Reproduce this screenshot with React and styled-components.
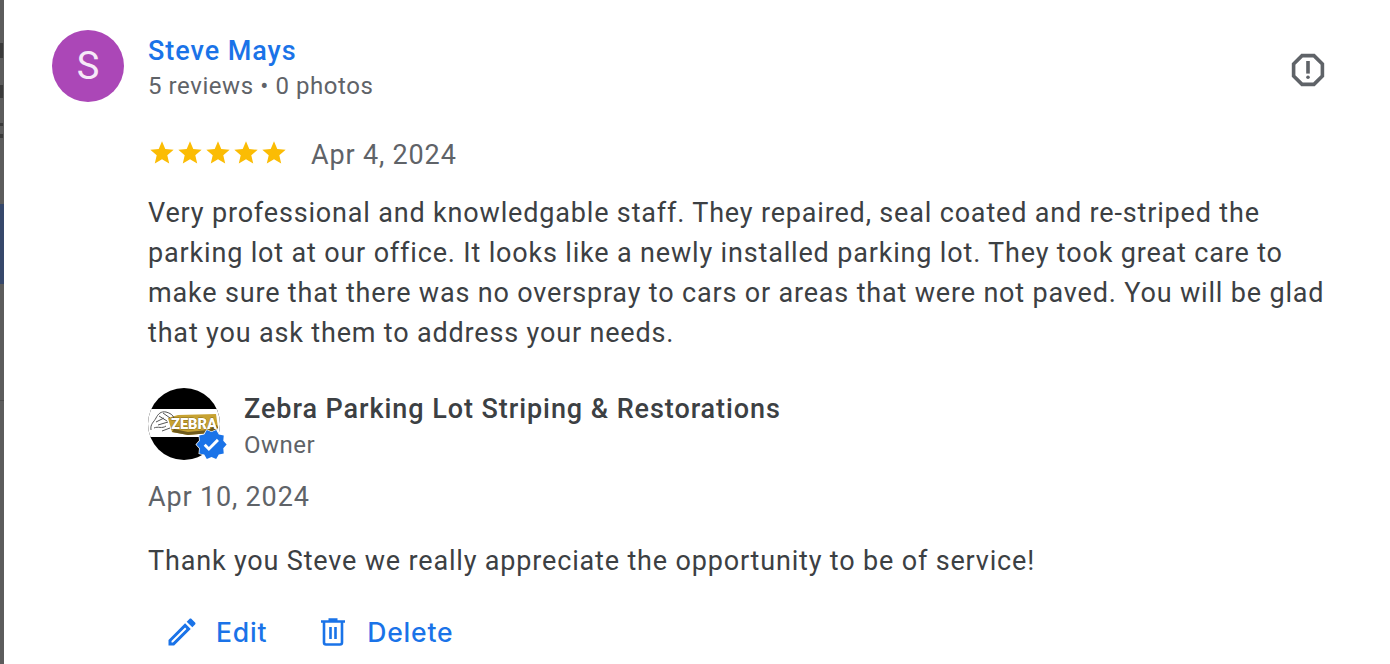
import React from "react";
import styled, { createGlobalStyle } from "styled-components";

const Global = createGlobalStyle`
  html, body {
    margin: 0;
    height: 100%;
    overflow: hidden;
    background: #fff;
  }
  body {
    font-family: Roboto, "Liberation Sans", sans-serif;
    color: #3c4043;
  }
`;

const Page = styled.div`
  display: flex;
  width: 1390px;
  height: 664px;
  overflow: hidden;
  background: #fff;
`;

const Backdrop = styled.div`
  position: relative;
  flex: 0 0 4px;
  height: 664px;
  overflow: hidden;
  background: #5c5c5c;
`;

const BackdropBand = styled.div`
  position: absolute;
  left: 0;
  right: 0;
  top: ${(p) => p.$top}px;
  height: ${(p) => p.$height}px;
  background: ${(p) => p.$color};
`;

const BackdropMark = styled.div`
  position: absolute;
  left: 0;
  width: 3px;
  top: ${(p) => p.$top}px;
  height: ${(p) => p.$height}px;
  background: #3a3a3a;
`;

const Card = styled.main`
  flex: 1;
  display: grid;
  grid-template-columns: 72px 1fr 36px;
  align-content: start;
  column-gap: 24px;
  padding: 30px 64px 0 48px;
`;

const Avatar = styled.div`
  width: 72px;
  height: 72px;
  border-radius: 50%;
  background: #ab47b7;
  color: #f6e9f8;
  font-size: 38px;
  line-height: 72px;
  text-align: center;
`;

const Header = styled.div`
  padding-top: 3px;
`;

const Name = styled.div`
  font-size: 27px;
  line-height: 36px;
  font-weight: 500;
  letter-spacing: 0.95px;
  color: #1a73e8;
`;

const Meta = styled.div`
  font-size: 24px;
  line-height: 32px;
  margin-top: 1px;
  letter-spacing: 0.57px;
  color: #5f6368;
`;

const Report = styled.div`
  display: flex;
  justify-content: center;
  padding-top: 20px;
`;

const Body = styled.div`
  grid-column: 2 / 4;
  padding-top: 33px;
`;

const RatingRow = styled.div`
  display: flex;
  align-items: center;
  gap: 23px;
  height: 40px;
`;

const Stars = styled.div`
  display: flex;
  margin-top: -4px;
`;

const DateText = styled.div`
  font-size: 27px;
  line-height: 40px;
  letter-spacing: 0.83px;
  color: #5f6368;
`;

const Paragraph = styled.p`
  margin: ${(p) => p.$top}px 0 0;
  font-size: 27px;
  line-height: 40px;
  letter-spacing: 0.83px;
  color: #3c4043;
`;

const Owner = styled.div`
  display: flex;
  gap: 24px;
  margin-top: 35px;
`;

const OwnerAvatar = styled.div`
  position: relative;
  width: 72px;
  height: 72px;
`;

const Badge = styled.svg`
  position: absolute;
  right: -8px;
  bottom: -1px;
`;

const OwnerText = styled.div`
  padding-top: 1px;
`;

const OwnerName = styled.div`
  font-size: 27px;
  line-height: 40px;
  font-weight: 500;
  letter-spacing: 0.93px;
  color: #3c4043;
`;

const OwnerRole = styled.div`
  font-size: 24px;
  line-height: 32px;
  letter-spacing: 0.5px;
  color: #5f6368;
`;

const OwnerDate = styled(DateText)`
  margin-top: 16px;
`;

const Actions = styled.div`
  display: flex;
  gap: 48px;
  margin-top: 31px;
  padding-left: 16px;
`;

const Action = styled.div`
  display: flex;
  align-items: center;
  gap: 16px;
  height: 40px;
  font-family: Inter, Roboto, sans-serif;
  font-size: 26.5px;
  font-weight: 500;
  letter-spacing: 0.8px;
  color: #1a73e8;
`;

const Star = () => (
  <svg width="28" height="28" viewBox="0 0 24 24" fill="#fbbc04">
    <path d="M12 17.27 18.18 21l-1.64-7.03L22 9.24l-7.19-.61L12 2 9.19 8.63 2 9.24l5.46 4.73L5.82 21z" />
  </svg>
);

const ZebraLogo = () => (
  <svg width="72" height="72" viewBox="0 0 72 72">
    <defs>
      <clipPath id="logoCircle">
        <circle cx="36" cy="36" r="36" />
      </clipPath>
    </defs>
    <g clipPath="url(#logoCircle)">
      <rect width="72" height="72" fill="#000" />
      <rect y="21" width="72" height="28" fill="#fff" />
      <path d="M20 30 L30 27 L68 26 L70 40 L62 45 L40 47 L24 44 Z" fill="#c7a232" />
      <path d="M24 44 L40 47 L62 45 L70 40 L69 37 L60 42 L40 44 L26 41 Z" fill="#6e5a1c" />
      <path d="M3 42 C2 36 6 34 8 30 C10 26 13 23 18 24 C22 25 25 27 26 30 M6 40 C10 38 14 41 18 38 M8 34 L16 30 M11 28 L19 33 M15 25 L22 30 M10 37 L20 34 M14 43 L22 40" fill="none" stroke="#555" strokeWidth="1" />
      <text x="23" y="41" fontFamily="Roboto, sans-serif" fontWeight="900" fontSize="15" fill="#fff" stroke="#3a3000" strokeWidth="0.4" paintOrder="stroke" textLength="46" lengthAdjust="spacingAndGlyphs">ZEBRA</text>
    </g>
  </svg>
);

const App = () => (
  <>
    <Global />
    <Page>
      <Backdrop>
        <BackdropBand $top={204} $height={80} $color="#36486b" />
        <BackdropBand $top={400} $height={1} $color="#4c4c4c" />
        <BackdropMark $top={43} $height={15} />
        <BackdropMark $top={85} $height={13} />
        <BackdropMark $top={123} $height={3} />
        <BackdropMark $top={134} $height={4} />
      </Backdrop>
      <Card>
        <Avatar>S</Avatar>
        <Header>
          <Name>Steve Mays</Name>
          <Meta>5 reviews • 0 photos</Meta>
        </Header>
        <Report>
          <svg width="40" height="40" viewBox="2 2 20 20" fill="#5f6368">
            <path d="M15.73 3H8.27L3 8.27v7.46L8.27 21h7.46L21 15.73V8.27L15.73 3zM19 14.9L14.9 19H9.1L5 14.9V9.1L9.1 5h5.8L19 9.1v5.8z" />
            <rect x="11" y="7" width="2" height="7" />
            <circle cx="12" cy="16" r="1" />
          </svg>
        </Report>
        <Body>
          <RatingRow>
            <Stars>
              <Star />
              <Star />
              <Star />
              <Star />
              <Star />
            </Stars>
            <DateText>Apr 4, 2024</DateText>
          </RatingRow>
          <Paragraph $top={18}>
            Very professional and knowledgable staff. They repaired, seal coated and re-striped the parking lot at our office. It looks like a newly installed parking lot. They took great care to make sure that there was no overspray to cars or areas that were not paved. You will be glad that you ask them to address your needs.
          </Paragraph>
          <Owner>
            <OwnerAvatar>
              <ZebraLogo />
              <Badge width="33" height="33" viewBox="0 0 24 24">
                <path fill="#1a73e8" stroke="#fff" strokeWidth="1" paintOrder="stroke" d="M23 12l-2.44-2.79.34-3.69-3.61-.82-1.89-3.2L12 2.96 8.6 1.5 6.71 4.69 3.1 5.5l.34 3.7L1 12l2.44 2.79-.34 3.7 3.61.82L8.6 22.5l3.4-1.47 3.4 1.46 1.89-3.19 3.61-.82-.34-3.69L23 12z" />
                <path fill="#fff" d="M10.09 16.72l-3.8-3.81 1.48-1.48 2.32 2.33 5.85-5.87 1.48 1.48-7.33 7.35z" />
              </Badge>
            </OwnerAvatar>
            <OwnerText>
              <OwnerName>Zebra Parking Lot Striping &amp; Restorations</OwnerName>
              <OwnerRole>Owner</OwnerRole>
            </OwnerText>
          </Owner>
          <OwnerDate>Apr 10, 2024</OwnerDate>
          <Paragraph $top={24}>Thank you Steve we really appreciate the opportunity to be of service!</Paragraph>
          <Actions>
            <Action>
              <svg width="36" height="36" viewBox="0 0 24 24" fill="#1a73e8">
                <path d="M14.06 9.02l.92.92L5.92 19H5v-.92l9.06-9.06M17.66 3c-.25 0-.51.1-.7.29l-1.83 1.83 3.75 3.75 1.83-1.83c.39-.39.39-1.02 0-1.41l-2.34-2.34c-.2-.2-.45-.29-.71-.29zm-3.6 3.19L3 17.25V21h3.75L17.81 9.94l-3.75-3.75z" />
              </svg>
              Edit
            </Action>
            <Action>
              <svg width="36" height="36" viewBox="-2 -2 36 36" fill="none" stroke="#1a73e8" strokeWidth="2.6">
                <path d="M4 5.500h24M7 6v20.500q0 2 2 2h14q2 0 2-2V6M11.500 3.500h9M13.500 11v12M18.500 11v12" />
              </svg>
              Delete
            </Action>
          </Actions>
        </Body>
      </Card>
    </Page>
  </>
);

export default App;
